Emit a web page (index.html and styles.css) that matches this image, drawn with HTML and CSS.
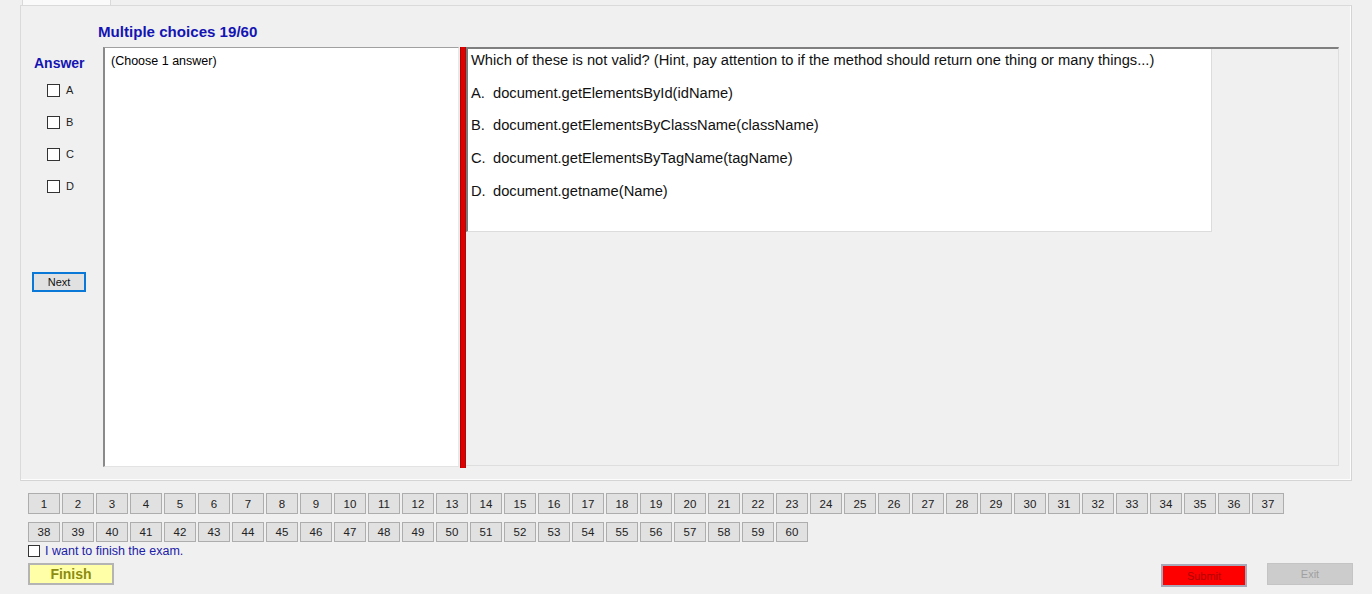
FILE: index.html
```html
<!DOCTYPE html>
<html>
<head>
<meta charset="utf-8">
<link rel="stylesheet" href="styles.css">
</head>
<body>
<div class="tabstrip"><div class="tab"></div></div>
<div class="tabpage">
  <div class="title">Multiple choices 19/60</div>
  <div class="main">
    <div class="answer-col">
      <div class="answer-head">Answer</div>
      <label class="opt"><span class="cb"></span>A</label>
      <label class="opt"><span class="cb"></span>B</label>
      <label class="opt"><span class="cb"></span>C</label>
      <label class="opt"><span class="cb"></span>D</label>
      <button class="next">Next</button>
    </div>
    <div class="answer-box">(Choose 1 answer)</div>
    <div class="redbar"></div>
    <div class="question-panel">
      <div class="question-box">
        <p>Which of these is not valid? (Hint, pay attention to if the method should return one thing or many things...)</p>
        <p><span class="lt">A.</span>document.getElementsById(idName)</p>
        <p><span class="lt">B.</span>document.getElementsByClassName(className)</p>
        <p><span class="lt">C.</span>document.getElementsByTagName(tagName)</p>
        <p><span class="lt">D.</span>document.getname(Name)</p>
      </div>
    </div>
  </div>
</div>
<div class="bottom">
  <div class="numrow">
    <button class="num">1</button><button class="num">2</button><button class="num">3</button><button class="num">4</button><button class="num">5</button><button class="num">6</button><button class="num">7</button><button class="num">8</button><button class="num">9</button><button class="num">10</button><button class="num">11</button><button class="num">12</button><button class="num">13</button><button class="num">14</button><button class="num">15</button><button class="num">16</button><button class="num">17</button><button class="num">18</button><button class="num">19</button><button class="num">20</button><button class="num">21</button><button class="num">22</button><button class="num">23</button><button class="num">24</button><button class="num">25</button><button class="num">26</button><button class="num">27</button><button class="num">28</button><button class="num">29</button><button class="num">30</button><button class="num">31</button><button class="num">32</button><button class="num">33</button><button class="num">34</button><button class="num">35</button><button class="num">36</button><button class="num">37</button>
  </div>
  <div class="numrow row2">
    <button class="num">38</button><button class="num">39</button><button class="num">40</button><button class="num">41</button><button class="num">42</button><button class="num">43</button><button class="num">44</button><button class="num">45</button><button class="num">46</button><button class="num">47</button><button class="num">48</button><button class="num">49</button><button class="num">50</button><button class="num">51</button><button class="num">52</button><button class="num">53</button><button class="num">54</button><button class="num">55</button><button class="num">56</button><button class="num">57</button><button class="num">58</button><button class="num">59</button><button class="num">60</button>
  </div>
  <label class="finish-check"><span class="cb"></span>I want to finish the exam.</label>
  <div class="actions">
    <button class="finish">Finish</button>
    <div class="spacer"></div>
    <button class="submit">Submit</button>
    <button class="exit">Exit</button>
  </div>
</div>
</body>
</html>
```
FILE: styles.css
```css
* { box-sizing: border-box; }
html, body { margin: 0; padding: 0; }
body {
  background: #f0f0f0;
  font-family: "Liberation Sans", Arial, sans-serif;
  width: 1372px;
  height: 594px;
  overflow: hidden;
  color: #000;
}
button { font-family: "Liberation Sans", Arial, sans-serif; padding: 0; margin: 0; cursor: default; }

.tabstrip {
  height: 5px;
  padding-left: 22px;
}
.tab {
  width: 89px;
  height: 5px;
  background: #fafafa;
  border-left: 1px solid #d9d9d9;
  border-right: 1px solid #d9d9d9;
}

.tabpage {
  margin-left: 20px;
  width: 1332px;
  height: 476px;
  border-top: 1px solid #dadada;
  border-left: 1px solid #dadada;
  border-right: 1px solid #d4d4d4;
  border-bottom: 1px solid #d4d4d4;
  box-shadow: inset -1px -1px 0 #fdfdfd;
  background: #f0f0f0;
}

.title {
  height: 41px;
  padding-left: 77px;
  padding-top: 17px;
  font-size: 15.1px;
  font-weight: bold;
  color: #1414b4;
}

.main {
  display: flex;
  height: 420px;
}

.answer-col {
  width: 82px;
  display: flex;
  flex-direction: column;
}
.answer-head {
  padding-left: 13px;
  padding-top: 8px;
  font-size: 14px;
  font-weight: bold;
  color: #1414b4;
  height: 30px;
}
.opt {
  display: flex;
  align-items: center;
  height: 32px;
  padding-left: 26px;
  font-size: 11px;
  color: #222;
  margin-top: -3px;
}
.opt + .opt { margin-top: 0; }
.cb {
  display: inline-block;
  width: 13px;
  height: 13px;
  border: 1px solid #333;
  background: #fff;
  margin-right: 6px;
  flex: none;
}
.next {
  margin-top: 70px;
  margin-left: 11px;
  width: 54px;
  height: 20px;
  background: #e1e1e1;
  border: 2px solid #0a78d7;
  font-size: 11px;
  color: #111;
}

.answer-box {
  width: 356px;
  height: 420px;
  background: #fff;
  border-top: 1px solid #a0a0a0;
  border-left: 2px solid #8a8a8a;
  border-right: 1px solid #e8e8e8;
  border-bottom: 1px solid #e3e3e3;
  padding: 6px 0 0 6px;
  font-size: 12.5px;
}

.redbar {
  width: 6px;
  height: 421px;
  margin-left: 1px;
  background: #e10000;
  border-left: 1px solid #b00000;
  border-right: 1px solid #a01010;
}

.question-panel {
  width: 873px;
  height: 419px;
  border-top: 2px solid #7f7f7f;
  border-right: 1px solid #dedede;
  border-bottom: 1px solid #dedede;
  background: #f0f0f0;
}
.question-box {
  width: 746px;
  height: 183px;
  background: #fff;
  border-left: 2px solid #7a7a7a;
  border-right: 1px solid #dcdcdc;
  border-bottom: 1px solid #dcdcdc;
  padding: 2px 0 0 3px;
  font-size: 14.7px;
  color: #111;
}
.question-box p {
  margin: 0;
  height: 32.7px;
  line-height: 18px;
}
.lt { display: inline-block; width: 22px; }

.bottom {
  padding-left: 28px;
  padding-top: 12px;
}
.numrow {
  display: flex;
  gap: 2px;
  height: 21px;
}
.row2 { margin-top: 8px; height: 20px; }
.num {
  width: 32px;
  height: 100%;
  background: #e1e1e1;
  border: 1px solid #adadad;
  font-size: 11.5px;
  color: #222;
}
.finish-check {
  display: flex;
  align-items: center;
  height: 14px;
  margin-top: 2px;
  font-size: 12.5px;
  color: #2020a8;
}
.finish-check .cb { width: 12px; height: 12px; margin-right: 5px; }

.actions {
  display: flex;
  margin-top: 5px;
  align-items: flex-start;
}
.finish {
  width: 86px;
  height: 22px;
  background: #ffffa8;
  border: 2px solid #b4b4b4;
  font-size: 14px;
  font-weight: bold;
  color: #8c8c10;
}
.spacer { flex: 1; }
.submit {
  width: 86px;
  height: 23px;
  margin-top: 1px;
  background: #ff0000;
  border: 2px solid #a8a8b8;
  font-size: 11px;
  color: #b00000;
}
.exit {
  width: 86px;
  height: 22px;
  margin-left: 20px;
  margin-right: 19px;
  background: #cccccc;
  border: 1px solid #c4c4c4;
  font-size: 11px;
  color: #a0a0a0;
}
```
